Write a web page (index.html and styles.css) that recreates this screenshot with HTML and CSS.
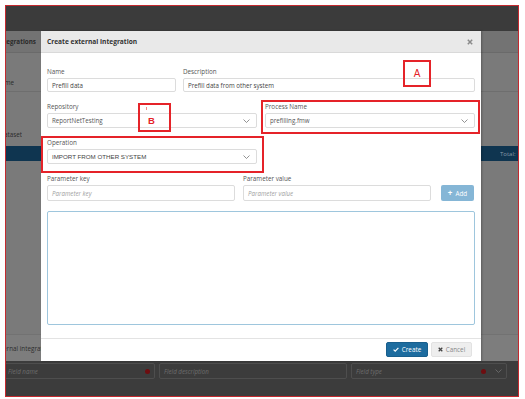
FILE: index.html
```html
<!DOCTYPE html>
<html>
<head>
<meta charset="utf-8">
<link rel="stylesheet" href="styles.css">
</head>
<body>
<div class="frame">
  <div class="topbar"></div>
  <div class="stage">
    <div class="bg">
      <div class="bg-head"><div class="clip w30 bold">External integrations</div></div>
      <div class="bg-cols"><div class="clip w8">Name</div></div>
      <div class="bg-rows"><div class="clip w16">Dataset</div></div>
      <div class="bg-sel"><span class="total">Total: 1</span></div>
      <div class="bg-fill"></div>
      <div class="bg-foot"><span class="foot-text">External integrations</span></div>
    </div>

    <div class="modal">
      <div class="modal-head">
        <span class="modal-title">Create external integration</span>
        <svg class="close" width="6" height="6" viewBox="0 0 6 6"><path d="M0.8 0.8 L5.2 5.2 M5.2 0.8 L0.8 5.2" stroke="#8a8a8a" stroke-width="1.5"/></svg>
      </div>
      <div class="modal-body">
        <div class="row row1">
          <div class="field">
            <label class="lbl">Name</label>
            <div class="input h14">Prefill data</div>
          </div>
          <div class="field">
            <label class="lbl">Description</label>
            <div class="input h14">Prefill data from other system</div>
          </div>
        </div>
        <div class="row row2">
          <div class="field">
            <label class="lbl">Repository</label>
            <div class="input select h15"><span class="val">ReportNetTesting</span><svg class="chev" width="7" height="4" viewBox="0 0 7 4"><path d="M0.5 0.5 L3.5 3.5 L6.5 0.5" fill="none" stroke="#777" stroke-width="0.8"/></svg></div>
          </div>
          <div class="field">
            <label class="lbl">Process Name</label>
            <div class="input select h15"><span class="val">prefilling.fmw</span><svg class="chev" width="7" height="4" viewBox="0 0 7 4"><path d="M0.5 0.5 L3.5 3.5 L6.5 0.5" fill="none" stroke="#777" stroke-width="0.8"/></svg></div>
          </div>
        </div>
        <div class="row row3">
          <div class="field">
            <label class="lbl">Operation</label>
            <div class="input select h15"><span class="val caps">IMPORT FROM OTHER SYSTEM</span><svg class="chev" width="7" height="4" viewBox="0 0 7 4"><path d="M0.5 0.5 L3.5 3.5 L6.5 0.5" fill="none" stroke="#777" stroke-width="0.8"/></svg></div>
          </div>
        </div>
        <div class="row row4">
          <div class="field">
            <label class="lbl">Parameter key</label>
            <div class="input h16 ph">Parameter key</div>
          </div>
          <div class="field">
            <label class="lbl">Parameter value</label>
            <div class="input h16 ph">Parameter value</div>
          </div>
          <div class="field add-wrap">
            <button class="btn-add"><span class="plus">+</span><span>Add</span></button>
          </div>
        </div>
        <div class="textarea"></div>
      </div>
      <div class="modal-foot">
        <button class="btn btn-create"><svg width="6" height="5" viewBox="0 0 6 5"><path d="M0.6 2.6 L2.2 4.1 L5.4 0.8" fill="none" stroke="#fff" stroke-width="1.2"/></svg>Create</button>
        <button class="btn btn-cancel"><svg width="5" height="5" viewBox="0 0 5 5"><path d="M0.7 0.7 L4.3 4.3 M4.3 0.7 L0.7 4.3" stroke="#444" stroke-width="1.3"/></svg>Cancel</button>
      </div>

      <div class="mark mark-a"><span>A</span></div>
      <div class="mark mark-b"><span class="tick"></span><span>B</span></div>
      <div class="mark mark-proc"></div>
      <div class="mark mark-op"></div>
    </div>
  </div>
  <div class="fieldbar">
    <div class="fb-input fb-name"><span class="fb-ph">Field name</span><span class="err"></span></div>
    <div class="fb-input fb-desc"><span class="fb-ph">Field description</span></div>
    <div class="fb-input fb-type"><span class="fb-ph">Field type</span><span class="err"></span><svg width="7" height="4" viewBox="0 0 7 4"><path d="M0.5 0.5 L3.5 3.5 L6.5 0.5" fill="none" stroke="#666" stroke-width="1"/></svg></div>
  </div>
</div>
</body>
</html>
```

FILE: styles.css
```css
* { box-sizing: border-box; }
html, body { margin: 0; padding: 0; background: #fff; }
body { width: 525px; height: 399px; font-family: "Open Sans", "DejaVu Sans", sans-serif; overflow: hidden; }

.frame {
  margin: 5px 0 0 5px;
  width: 514px;
  height: 392px;
  border: 1px solid #c42a2f;
  display: flex;
  flex-direction: column;
  overflow: hidden;
}
.topbar { height: 25px; background: #3b3b3b; flex: none; }
.stage { position: relative; height: 330px; flex: none; background: #7a7a7a; }
.fieldbar { flex: 1; background: #3c3c3c; display: flex; align-items: flex-start; padding-top: 2px; gap: 4px; }

/* background page (dimmed) */
.bg { display: flex; flex-direction: column; height: 100%; color: #2a2a2a; font-size: 6.3px; }
.bg-head { height: 22px; background: #737373; border-bottom: 1px solid #6a6a6a; display: flex; align-items: center; }
.bg-cols { height: 39px; border-bottom: 1px solid #6e6e6e; display: flex; align-items: flex-end; padding-bottom: 4px; }
.bg-rows { height: 54px; display: flex; align-items: flex-end; padding-bottom: 7px; }
.bg-sel { height: 15px; background: #0f3550; display: flex; align-items: center; justify-content: flex-end; padding-right: 2px; }
.total { color: #8a9aa8; font-size: 6px; width: 16px; overflow: hidden; white-space: nowrap; }
.bg-fill { flex: 1; border-bottom: 1px solid #727272; }
.bg-foot { height: 26px; background: #7d7d7d; display: flex; align-items: center; }
.foot-text { margin-left: -12px; white-space: nowrap; color: #2e2e2e; }
.clip { display: flex; justify-content: flex-end; overflow: hidden; white-space: nowrap; }
.w30 { width: 30px; }
.w8 { width: 8px; }
.w16 { width: 16px; }
.bold { font-weight: 700; }

/* modal */
.modal {
  position: absolute;
  left: 35px;
  top: 0;
  width: 440px;
  height: 330px;
  background: #fff;
  display: flex;
  flex-direction: column;
  box-shadow: 1px 0 2px rgba(0,0,0,0.25);
}
.modal-head {
  height: 22px;
  flex: none;
  background: #e9e9e9;
  border-bottom: 1px solid #d9d9d9;
  display: flex;
  align-items: center;
  justify-content: space-between;
  padding: 0 8px 0 6px;
}
.modal-title { font-size: 6.6px; font-weight: 700; color: #333; }
.close { display: block; }

.modal-body { flex: 1; padding: 14px 6px 0 6px; }
.row { display: grid; }
.row1 { grid-template-columns: 129px 292px; column-gap: 7px; }
.row2 { grid-template-columns: 210px 210px; column-gap: 8px; margin-top: 10px; }
.row3 { grid-template-columns: 210px; margin-top: 10px; }
.row4 { grid-template-columns: 188px 188px 33px; column-gap: 8px; margin-top: 10px; }
.row4 .add-wrap { margin-left: 2px; }
.field { display: flex; flex-direction: column; }
.lbl { display: block; font-size: 6.3px; line-height: 10px; height: 10px; margin-bottom: 1px; color: #555; }

.input {
  border: 1px solid #dcdcdc;
  border-radius: 2px;
  font-size: 6.2px;
  color: #444;
  padding: 0 4px;
  display: flex;
  align-items: center;
  white-space: nowrap;
}
.h14 { height: 14px; }
.h15 { height: 15px; }
.h16 { height: 16px; }
.select { justify-content: space-between; padding-right: 6px; }
.val { color: #555; }
.caps { font-family: "Liberation Sans", Arial, sans-serif; font-size: 6.2px; color: #444; }
.chev { display: block; }
.ph { color: #a0a0a0; font-style: italic; }

.add-wrap { justify-content: flex-end; }
.btn-add {
  height: 16px;
  width: 33px;
  border: none;
  border-radius: 2px;
  background: #85b6d6;
  color: #fff;
  font-family: "Open Sans", sans-serif;
  font-size: 6.3px;
  padding: 0;
  display: flex;
  align-items: center;
  justify-content: center;
  gap: 3px;
}
.plus { font-weight: 700; font-size: 8px; line-height: 1; }

.textarea {
  margin-top: 10px;
  height: 114px;
  border: 1.5px solid #9ec6dd;
  border-radius: 2px;
}

.modal-foot {
  height: 23px;
  flex: none;
  border-top: 1px solid #e3e3e3;
  display: flex;
  justify-content: flex-end;
  align-items: flex-start;
  padding: 3px 9px 0 0;
  gap: 3px;
}
.btn {
  height: 15px;
  border-radius: 2px;
  font-family: "Open Sans", sans-serif;
  font-size: 6.3px;
  display: flex;
  align-items: center;
  justify-content: center;
  gap: 3px;
  padding: 0;
}
.btn-create { width: 42px; background: #1d6c9f; border: 1px solid #195f8d; color: #fff; }
.btn-cancel { width: 41px; background: #eeeeee; border: 1px solid #e2e2e2; color: #888; }

/* annotation boxes */
.mark { position: absolute; border: 2px solid #e52329; }
.mark-a { left: 362px; top: 29px; width: 28px; height: 27px; display: flex; align-items: center; justify-content: center; color: #e52329; font-size: 10px; font-family: "Liberation Sans", Arial, sans-serif; }
.mark-b { left: 97px; top: 72px; width: 33px; height: 29px; display: flex; align-items: center; justify-content: center; color: #e52329; font-size: 9.5px; font-weight: 700; font-family: "Liberation Sans", Arial, sans-serif; }
.mark-b .tick { position: absolute; left: 6px; top: 2px; width: 1px; height: 3px; background: #f08a8c; }
.mark-b span:last-child { margin-top: 5px; margin-right: 6px; }
.mark-proc { left: 220px; top: 69px; width: 219px; height: 34px; }
.mark-op { left: 0; top: 105px; width: 223px; height: 37px; }

/* bottom field bar */
.fb-input {
  height: 16px;
  border: 1px solid #4e4e4e;
  border-radius: 2px;
  display: flex;
  align-items: center;
  padding: 0 4px;
  gap: 6px;
}
.fb-ph { color: #6e6e6e; font-style: italic; font-size: 6.2px; flex: 1; white-space: nowrap; }
.fb-name { width: 151px; margin-left: -2px; padding-left: 3px; }
.fb-desc { width: 188px; }
.fb-type { width: 156px; }
.err { width: 5px; height: 5px; border-radius: 50%; background: #6e0d10; flex: none; }
.fb-type svg { display: block; margin-left: 3px; }
```
